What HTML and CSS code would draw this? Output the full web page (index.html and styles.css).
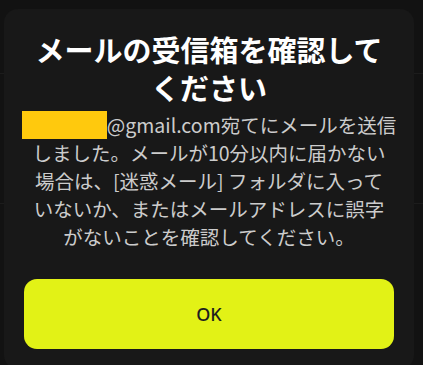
FILE: index.html
```html
<!DOCTYPE html>
<html lang="ja">
<head>
<meta charset="utf-8">
<title>メールの受信箱を確認してください</title>
<link rel="stylesheet" href="styles.css">
</head>
<body>
<div class="dialog">
  <h1 class="title">メールの受信箱を確認して<br>ください</h1>
  <p class="message"><span class="redact"></span>@gmail.com宛てにメールを送信<br>しました。メールが10分以内に届かない<br>場合は、[迷惑メール] フォルダに入って<br>いないか、またはメールアドレスに誤字<br>がないことを確認してください。</p>
  <button class="ok">OK</button>
</div>
</body>
</html>
```
FILE: styles.css
```css
html, body {
  margin: 0;
  padding: 0;
}
body {
  width: 423px;
  height: 365px;
  overflow: hidden;
  background-color: #121212;
  background-image:
    linear-gradient(#1c1c1c, #1c1c1c),
    linear-gradient(#1c1c1c, #1c1c1c);
  background-repeat: no-repeat;
  background-size: 100% 1px, 100% 1px;
  background-position: 0 73px, 0 203px;
  font-family: "Noto Sans CJK JP", "Noto Sans", sans-serif;
  padding: 9px 9px 0 4px;
  box-sizing: border-box;
}
.dialog {
  width: 410px;
  box-sizing: border-box;
  background: #181818;
  border-radius: 14px;
  padding: 21px 20px 20px;
  display: flex;
  flex-direction: column;
  align-items: center;
}
.title {
  margin: 0;
  color: #ffffff;
  font-size: 29px;
  line-height: 38px;
  font-weight: 700;
  text-align: center;
  white-space: nowrap;
}
.message {
  margin: 5px -6px 0;
  color: #cccccc;
  font-size: 19.5px;
  line-height: 28px;
  text-align: center;
  white-space: nowrap;
}
.redact {
  display: inline-block;
  width: 85px;
  height: 28px;
  background: #ffc90d;
  vertical-align: top;
}
.ok {
  margin-top: 28px;
  width: 370px;
  height: 70px;
  border: 0;
  border-radius: 13px;
  background: #e2f216;
  color: #1e1e1e;
  font-family: "Noto Sans", "Open Sans", sans-serif;
  font-size: 18px;
  font-weight: 500;
  cursor: pointer;
}
```
